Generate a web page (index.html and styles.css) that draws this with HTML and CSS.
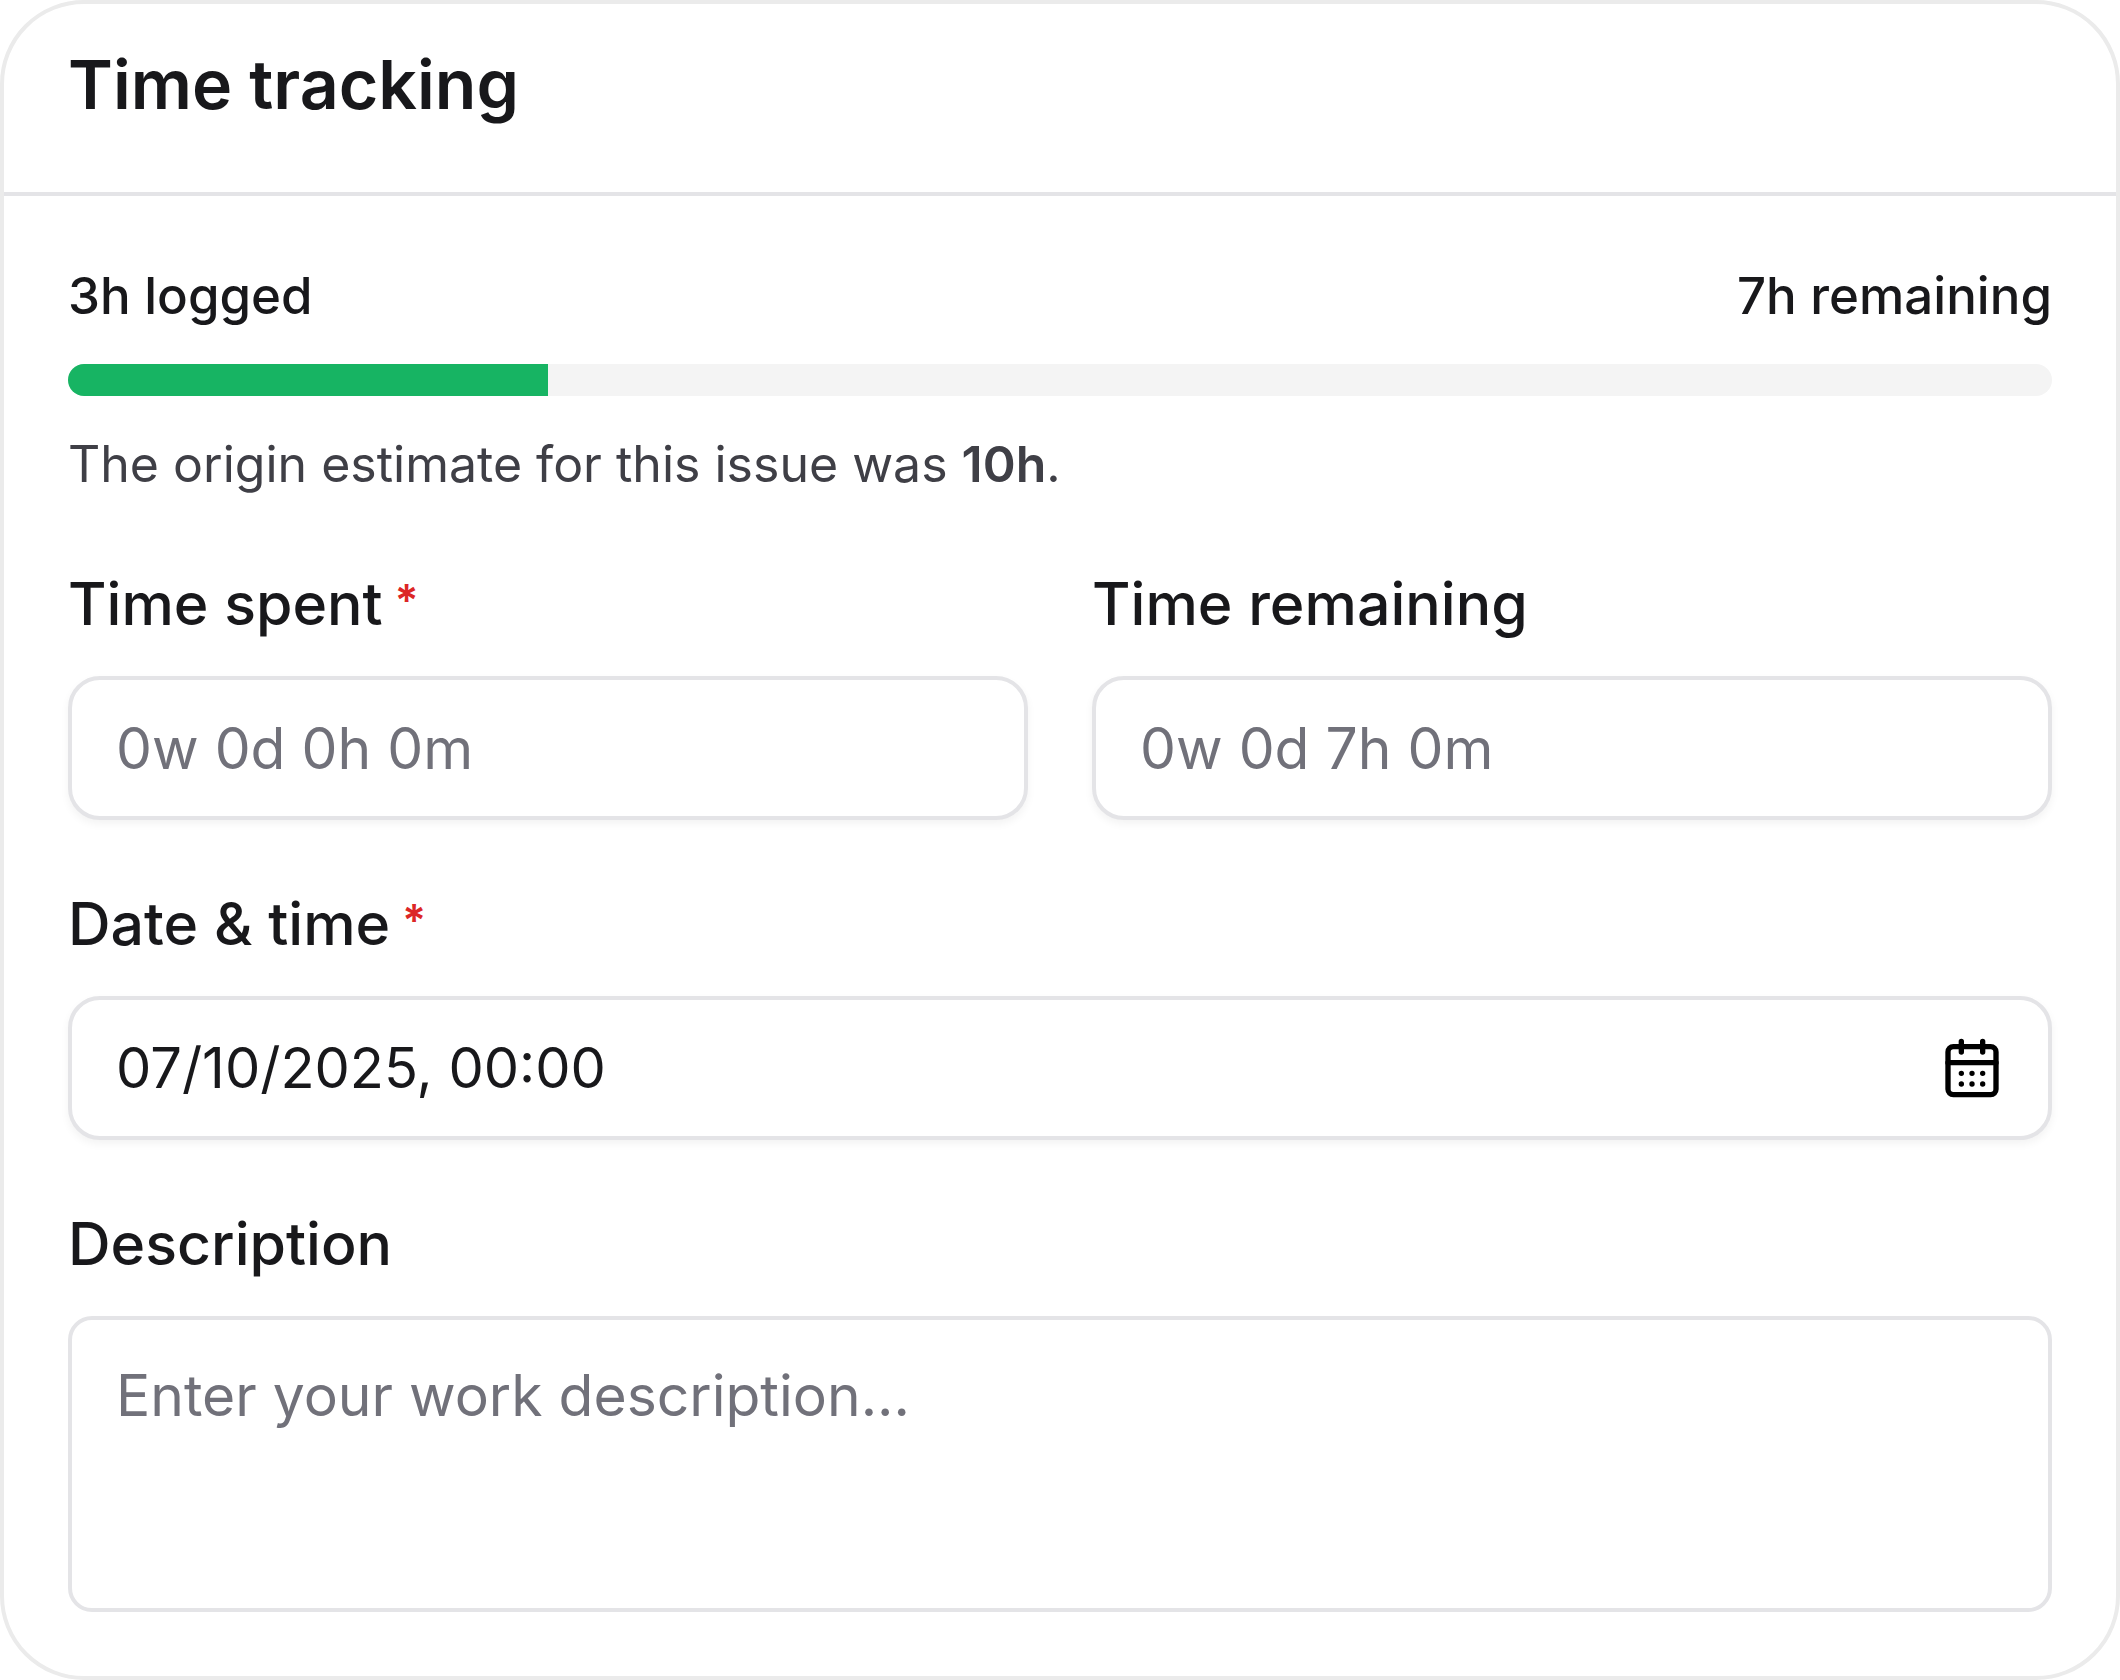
FILE: index.html
```html
<!DOCTYPE html>
<html lang="en">
<head>
    <meta charset="UTF-8">
    <meta name="viewport" content="width=device-width, initial-scale=1.0">
    <title>Time tracking</title>
    <link rel="stylesheet" href="styles.css">
</head>
<body>
    <form class="card">
        <header class="card-header">
            <h1 class="title">Time tracking</h1>
        </header>
        <div class="card-body">
            <section class="summary">
                <div class="summary-row">
                    <span>3h logged</span>
                    <span>7h remaining</span>
                </div>
                <div class="progress">
                    <div class="progress-bar" style="width: 24.2%"></div>
                </div>
                <p class="note">The origin estimate for this issue was <strong>10h</strong>.</p>
            </section>

            <div class="row">
                <div class="field">
                    <label class="label" for="spent">Time spent <span class="required">*</span></label>
                    <input class="control" type="text" id="spent" placeholder="0w 0d 0h 0m">
                </div>
                <div class="field">
                    <label class="label" for="remaining">Time remaining</label>
                    <input class="control" type="text" id="remaining" placeholder="0w 0d 7h 0m">
                </div>
            </div>

            <div class="field">
                <label class="label" for="date">Date &amp; time <span class="required">*</span></label>
                <div class="control date-control">
                    <input class="date-input" type="text" id="date" value="07/10/2025, 00:00">
                    <button class="date-button" type="button" aria-label="Open calendar">
                        <svg class="icon" viewBox="0 0 24 24">
                            <path d="M8 2v4M16 2v4M3 10h18"/>
                            <rect x="3" y="4" width="18" height="18" rx="2"/>
                            <path d="M8 14h.01M12 14h.01M16 14h.01M8 18h.01M12 18h.01M16 18h.01"/>
                        </svg>
                    </button>
                </div>
            </div>

            <div class="field">
                <label class="label" for="description">Description</label>
                <textarea class="control description" id="description" placeholder="Enter your work description..."></textarea>
            </div>
        </div>
    </form>
</body>
</html>
```
FILE: styles.css
```css
* {
    margin: 0;
    padding: 0;
    box-sizing: border-box;
}
body {
    background: #fff;
    color: #18181b;
    font-family: Inter, "Open Sans", sans-serif;
}
input, textarea, button {
    font: inherit;
    color: inherit;
    border: none;
    background: none;
}

/* card */
.card {
    border: 4px solid #ebebeb;
    border-radius: 84px;
    background: #fff;
}
.card-header {
    padding: 48px 64px 76px;
    border-bottom: 4px solid #e4e4e7;
}
.title {
    font-size: 68px;
    line-height: 64px;
    font-weight: 600;
}
.card-body {
    display: flex;
    flex-direction: column;
    gap: 64px;
    padding: 64px;
}

/* logged / remaining */
.summary {
    display: flex;
    flex-direction: column;
    gap: 32px;
    font-size: 50px;
    line-height: 72px;
}
.summary-row {
    display: flex;
    justify-content: space-between;
    font-size: 51px;
    font-weight: 500;
}
.progress {
    height: 32px;
    border-radius: 16px;
    background: #f4f4f4;
    overflow: hidden;
}
.progress-bar {
    height: 100%;
    background: #17b463;
}
.note {
    color: #3f3f46;
}
.note strong {
    font-weight: 600;
}

/* fields */
.row {
    display: grid;
    grid-template-columns: 1fr 1fr;
    gap: 64px;
}
.field {
    display: flex;
    flex-direction: column;
    gap: 32px;
}
.label {
    display: flex;
    align-items: flex-start;
    gap: 12px;
    font-size: 59px;
    line-height: 80px;
    font-weight: 500;
}
.required {
    font-size: 44px;
    line-height: 72px;
    font-weight: 600;
    color: #dc2626;
}
.control {
    width: 100%;
    height: 144px;
    padding: 0 44px;
    border: 4px solid #e4e4e7;
    border-radius: 32px;
    background: #fff;
    box-shadow: 0 4px 8px rgba(0, 0, 0, 0.05);
    font-size: 57px;
}
.control::placeholder {
    color: #71717a;
    opacity: 1;
}
.date-control {
    display: flex;
    align-items: center;
    font-size: 56px;
}
.date-input {
    flex: 1;
    min-width: 0;
    outline: none;
}
.date-button {
    display: flex;
    color: #000;
    cursor: pointer;
}
.icon {
    width: 64px;
    height: 64px;
    fill: none;
    stroke: currentColor;
    stroke-width: 2;
    stroke-linecap: round;
    stroke-linejoin: round;
}
.description {
    display: block;
    height: 296px;
    padding: 36px 44px;
    border-radius: 24px;
    box-shadow: none;
    line-height: 80px;
    resize: none;
}
```
